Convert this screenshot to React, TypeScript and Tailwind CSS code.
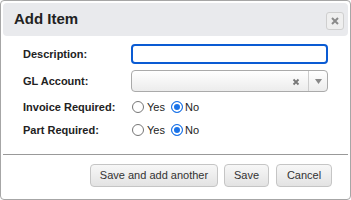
import React from 'react'

const Radio = ({ checked }: { checked?: boolean }) => (
  <span
    className={`inline-block w-[12px] h-[12px] rounded-full box-border border ${
      checked
        ? 'border-[#1a73e8] bg-[#1a73e8] shadow-[inset_0_0_0_2px_white]'
        : 'border-[#767676] bg-white'
    }`}
  />
)

const RadioPair = () => (
  <div className="flex items-center h-[14px] text-[11px] text-[#222] pl-[1px]">
    <Radio />
    <span className="ml-[3px]">Yes</span>
    <span className="ml-[6px] flex items-center">
      <Radio checked />
    </span>
    <span className="ml-[2px]">No</span>
  </div>
)

const btn =
  'h-[23px] text-[11px] text-[#333] border border-[#c5c5c5] rounded-[4px] bg-gradient-to-b from-[#f7f7f7] to-[#e3e3e3] flex items-center justify-center'

const App: React.FC = () => {
  return (
    <div className="w-[351px] h-[200px] bg-white box-border border border-[#a6a6a6] rounded-[4px] p-[2px] font-['Liberation_Sans',Arial,sans-serif] text-[#222]">
      {/* Header */}
      <div className="h-[33px] bg-[#e9eaed] rounded-[4px] flex items-center justify-between pl-[11px] pr-[4px]">
        <span className="text-[15px] font-bold text-[#222]">Add Item</span>
        <button className="w-[18px] h-[18px] mt-[3px] border border-[#cfcfcf] rounded-[3px] bg-[#efefef] flex items-center justify-center">
          <svg width="8" height="8" viewBox="0 0 8 8">
            <path d="M1 1 L7 7 M7 1 L1 7" stroke="#8a8a8a" strokeWidth="2" />
          </svg>
        </button>
      </div>

      {/* Form */}
      <div className="pl-[20px] pt-[8px] flex flex-col">
        <div className="flex items-center h-[20px]">
          <label className="w-[108px] text-[11px] font-bold leading-none">Description:</label>
          <input className="w-[197px] h-[20px] box-border border-2 border-[#0a5bd3] rounded-[4px] outline-none" />
        </div>

        <div className="flex items-center h-[22px] mt-[6px]">
          <label className="w-[108px] text-[11px] font-bold leading-none">GL Account:</label>
          <div className="w-[197px] h-[22px] box-border border border-[#aaa] rounded-[4px] bg-gradient-to-b from-white to-[#ececec] flex items-center">
            <div className="flex-1" />
            <svg width="8" height="8" viewBox="0 0 8 8" className="mr-[8px] mt-[1px]">
              <path d="M1.5 1.5 L6.5 6.5 M6.5 1.5 L1.5 6.5" stroke="#777" strokeWidth="1.8" />
            </svg>
            <div className="w-[19px] h-full border-l border-[#ccc] flex items-center justify-center">
              <svg width="7" height="5" viewBox="0 0 7 5">
                <path d="M0 0 L7 0 L3.5 5 Z" fill="#888" />
              </svg>
            </div>
          </div>
        </div>

        <div className="flex items-center h-[14px] mt-[8px]">
          <label className="w-[108px] text-[11px] font-bold leading-none">Invoice Required:</label>
          <RadioPair />
        </div>

        <div className="flex items-center h-[14px] mt-[9px]">
          <label className="w-[108px] text-[11px] font-bold leading-none">Part Required:</label>
          <RadioPair />
        </div>
      </div>

      {/* Footer */}
      <div className="mt-[17px] border-t border-[#999] flex justify-end pt-[9px] pr-[16px]">
        <button className={`${btn} w-[128px]`}>Save and add another</button>
        <button className={`${btn} w-[45px] ml-[6px]`}>Save</button>
        <button className={`${btn} w-[56px] ml-[7px]`}>Cancel</button>
      </div>
    </div>
  )
}

export default App
